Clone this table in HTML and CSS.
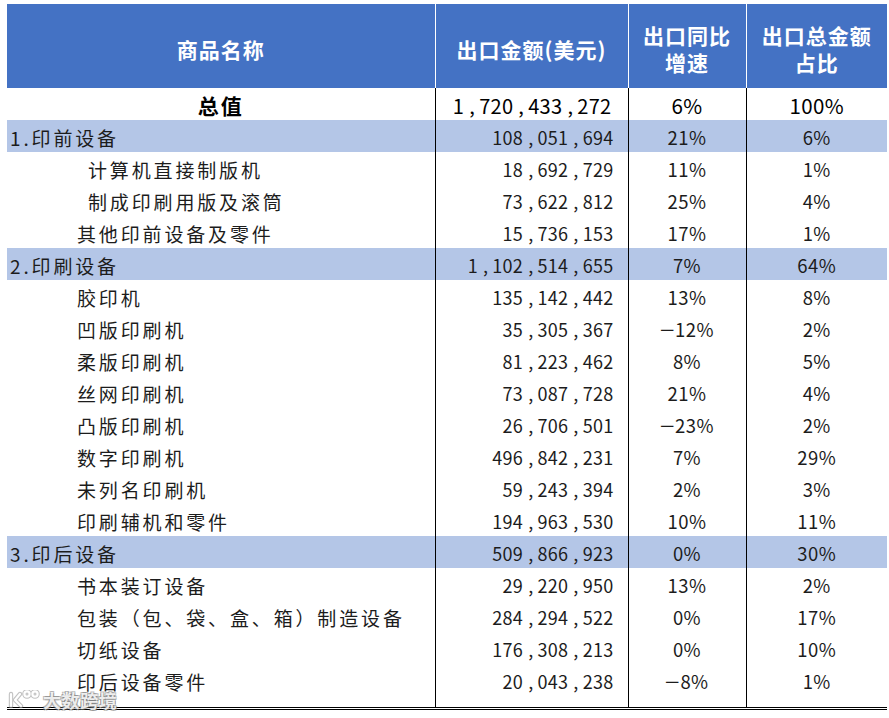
FILE: index.html
```html
<!DOCTYPE html>
<html lang="zh-CN">
<head>
<meta charset="utf-8">
<title>出口统计</title>
<link rel="stylesheet" href="styles.css">
</head>
<body>
<div class="page">
<table class="data">
  <colgroup>
    <col class="c1"><col class="c2"><col class="c3"><col class="c4">
  </colgroup>
  <thead>
    <tr>
      <th class="name">商品名称</th>
      <th>出口金额(美元)</th>
      <th><span class="hl">出口同比</span><span class="hl">增速</span></th>
      <th><span class="hl">出口总金额</span><span class="hl">占比</span></th>
    </tr>
  </thead>
  <tbody>
    <tr class="total">
      <td class="center">总值</td>
      <td class="num">1<span class="c">,</span>720<span class="c">,</span>433<span class="c">,</span>272</td>
      <td class="pct">6%</td>
      <td class="pct">100%</td>
    </tr>
    <tr class="band">
      <td class="sec">1.印前设备</td>
      <td class="num">108<span class="c">,</span>051<span class="c">,</span>694</td>
      <td class="pct">21%</td>
      <td class="pct">6%</td>
    </tr>
    <tr>
      <td class="sub2">计算机直接制版机</td>
      <td class="num">18<span class="c">,</span>692<span class="c">,</span>729</td>
      <td class="pct">11%</td>
      <td class="pct">1%</td>
    </tr>
    <tr>
      <td class="sub2">制成印刷用版及滚筒</td>
      <td class="num">73<span class="c">,</span>622<span class="c">,</span>812</td>
      <td class="pct">25%</td>
      <td class="pct">4%</td>
    </tr>
    <tr>
      <td class="sub">其他印前设备及零件</td>
      <td class="num">15<span class="c">,</span>736<span class="c">,</span>153</td>
      <td class="pct">17%</td>
      <td class="pct">1%</td>
    </tr>
    <tr class="band">
      <td class="sec">2.印刷设备</td>
      <td class="num">1<span class="c">,</span>102<span class="c">,</span>514<span class="c">,</span>655</td>
      <td class="pct">7%</td>
      <td class="pct">64%</td>
    </tr>
    <tr>
      <td class="sub">胶印机</td>
      <td class="num">135<span class="c">,</span>142<span class="c">,</span>442</td>
      <td class="pct">13%</td>
      <td class="pct">8%</td>
    </tr>
    <tr>
      <td class="sub">凹版印刷机</td>
      <td class="num">35<span class="c">,</span>305<span class="c">,</span>367</td>
      <td class="pct"><span class="minus">−</span>12%</td>
      <td class="pct">2%</td>
    </tr>
    <tr>
      <td class="sub">柔版印刷机</td>
      <td class="num">81<span class="c">,</span>223<span class="c">,</span>462</td>
      <td class="pct">8%</td>
      <td class="pct">5%</td>
    </tr>
    <tr>
      <td class="sub">丝网印刷机</td>
      <td class="num">73<span class="c">,</span>087<span class="c">,</span>728</td>
      <td class="pct">21%</td>
      <td class="pct">4%</td>
    </tr>
    <tr>
      <td class="sub">凸版印刷机</td>
      <td class="num">26<span class="c">,</span>706<span class="c">,</span>501</td>
      <td class="pct"><span class="minus">−</span>23%</td>
      <td class="pct">2%</td>
    </tr>
    <tr>
      <td class="sub">数字印刷机</td>
      <td class="num">496<span class="c">,</span>842<span class="c">,</span>231</td>
      <td class="pct">7%</td>
      <td class="pct">29%</td>
    </tr>
    <tr>
      <td class="sub">未列名印刷机</td>
      <td class="num">59<span class="c">,</span>243<span class="c">,</span>394</td>
      <td class="pct">2%</td>
      <td class="pct">3%</td>
    </tr>
    <tr>
      <td class="sub">印刷辅机和零件</td>
      <td class="num">194<span class="c">,</span>963<span class="c">,</span>530</td>
      <td class="pct">10%</td>
      <td class="pct">11%</td>
    </tr>
    <tr class="band">
      <td class="sec">3.印后设备</td>
      <td class="num">509<span class="c">,</span>866<span class="c">,</span>923</td>
      <td class="pct">0%</td>
      <td class="pct">30%</td>
    </tr>
    <tr>
      <td class="sub">书本装订设备</td>
      <td class="num">29<span class="c">,</span>220<span class="c">,</span>950</td>
      <td class="pct">13%</td>
      <td class="pct">2%</td>
    </tr>
    <tr>
      <td class="sub">包装（包、袋、盒、箱）制造设备</td>
      <td class="num">284<span class="c">,</span>294<span class="c">,</span>522</td>
      <td class="pct">0%</td>
      <td class="pct">17%</td>
    </tr>
    <tr>
      <td class="sub">切纸设备</td>
      <td class="num">176<span class="c">,</span>308<span class="c">,</span>213</td>
      <td class="pct">0%</td>
      <td class="pct">10%</td>
    </tr>
    <tr>
      <td class="sub">印后设备零件</td>
      <td class="num">20<span class="c">,</span>043<span class="c">,</span>238</td>
      <td class="pct"><span class="minus">−</span>8%</td>
      <td class="pct">1%</td>
    </tr>
    <tr class="spacer">
      <td></td><td></td><td></td><td></td>
    </tr>
  </tbody>
</table>
<div class="watermark">
  <svg class="wm-logo" width="36" height="19" viewBox="0 0 36 19">
    <g fill="none" stroke="#9a9a9a" stroke-width="4.4" stroke-linecap="round" stroke-linejoin="round" opacity="0.6">
      <path d="M4 4 V16"/><path d="M13 4 L8 10 L14 16"/>
      <circle cx="20" cy="4" r="2.6"/><circle cx="28" cy="4" r="2.6"/>
    </g>
    <g fill="none" stroke="#ffffff" stroke-width="2.2" stroke-linecap="round" stroke-linejoin="round">
      <path d="M4 4 V16"/><path d="M13 4 L8 10 L14 16"/>
      <circle cx="20" cy="4" r="2.6"/><circle cx="28" cy="4" r="2.6"/>
    </g>
  </svg>
  <span class="wm-text">大数跨境</span>
</div>
</div>
</body>
</html>
```

FILE: styles.css
```css
html, body {
  margin: 0;
  padding: 0;
  background: #ffffff;
}

.page {
  position: relative;
  width: 889px;
  height: 718px;
  padding: 4px 0 0 7px;
  box-sizing: border-box;
  font-family: "Noto Sans CJK SC", "Liberation Sans", sans-serif;
  color: #1c1c1c;
}

.data {
  border-collapse: collapse;
  table-layout: fixed;
  width: 880px;
}

.c1 { width: 428px; }
.c2 { width: 193px; }
.c3 { width: 118px; }
.c4 { width: 141px; }

.data th {
  background: #4472c4;
  color: #ffffff;
  font-size: 21px;
  font-weight: 700;
  line-height: 27px;
  height: 84px;
  padding: 6px 0 0 0;
  box-sizing: border-box;
  text-align: center;
  vertical-align: middle;
  letter-spacing: 1px;
  border-left: 1px solid #ffffff;
}

.data th.name {
  border-left: none;
}

.hl {
  display: block;
  height: 27px;
  line-height: 27px;
}

.data td {
  height: 32px;
  padding: 3px 0 0 0;
  box-sizing: border-box;
  line-height: 29px;
  font-size: 19px;
  letter-spacing: 2.85px;
  white-space: nowrap;
  border-left: 1px solid #000000;
  vertical-align: middle;
}

.data td:first-child {
  border-left: none;
}

.band td {
  background: #b4c6e7;
}

.sec { padding-left: 3px !important; }
.sub { padding-left: 70px !important; }
.sub2 { padding-left: 81px !important; }

.center {
  text-align: center;
}

.num {
  text-align: right;
  padding-right: 14px !important;
  font-size: 18px !important;
  letter-spacing: 0.3px !important;
}

.c {
  display: inline-block;
  margin: 0 4px 0 5px;
}

.pct {
  text-align: center;
  font-size: 18.5px !important;
  letter-spacing: 0.4px !important;
}

.minus {
  display: inline-block;
  width: 15px;
  text-align: center;
  transform: scaleX(1.4);
}

.total td {
  color: #000000;
  font-weight: 700;
  font-size: 21px;
  letter-spacing: 2px;
}

.total .num,
.total .pct {
  font-size: 20px !important;
  font-weight: 400;
  padding-right: 16px !important;
}

.total .pct {
  padding-right: 0 !important;
  font-size: 20.5px !important;
}

.spacer td {
  height: 12px;
  padding: 0;
  line-height: 0;
  border-bottom: 3px double #000000;
}

.watermark {
  position: absolute;
  left: 7px;
  top: 690px;
  display: flex;
  align-items: flex-end;
}

.wm-logo {
  display: block;
  margin-bottom: 1px;
}

.wm-text {
  font-family: "Noto Sans CJK SC", sans-serif;
  font-size: 18px;
  font-weight: 700;
  line-height: 19px;
  letter-spacing: 0.6px;
  color: rgba(255, 255, 255, 0.85);
  text-shadow:
    -1px -1px 0 rgba(120,120,120,0.5),
    1px -1px 0 rgba(120,120,120,0.5),
    -1px 1px 0 rgba(120,120,120,0.5),
    1px 1px 0 rgba(120,120,120,0.5);
}
```
